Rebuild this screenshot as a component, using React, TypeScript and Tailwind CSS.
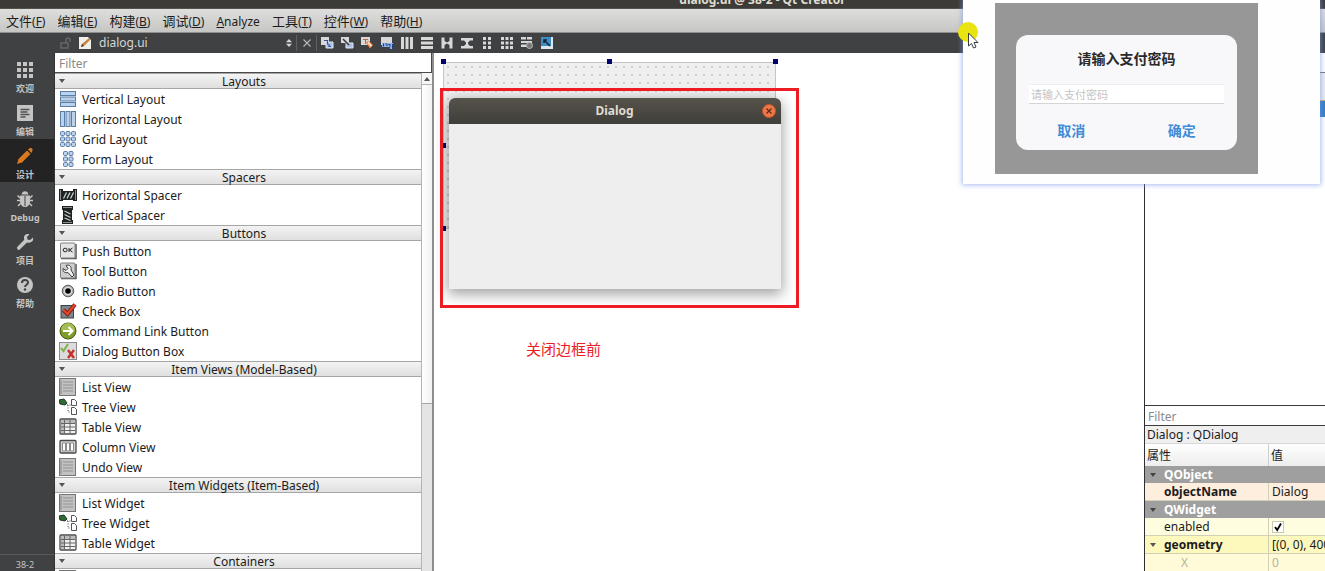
import type { ReactNode } from 'react';

/* ---------- data ---------- */

const menus: { text: string; key: string; latin?: boolean }[] = [
  { text: '文件', key: 'F' },
  { text: '编辑', key: 'E' },
  { text: '构建', key: 'B' },
  { text: '调试', key: 'D' },
  { text: 'nalyze', key: 'A', latin: true },
  { text: '工具', key: 'T' },
  { text: '控件', key: 'W' },
  { text: '帮助', key: 'H' },
];

const groups: { title: string; items: [string, string][] }[] = [
  {
    title: 'Layouts',
    items: [
      ['vlayout', 'Vertical Layout'],
      ['hlayout', 'Horizontal Layout'],
      ['grid', 'Grid Layout'],
      ['form', 'Form Layout'],
    ],
  },
  {
    title: 'Spacers',
    items: [
      ['hspacer', 'Horizontal Spacer'],
      ['vspacer', 'Vertical Spacer'],
    ],
  },
  {
    title: 'Buttons',
    items: [
      ['push', 'Push Button'],
      ['tool', 'Tool Button'],
      ['radio', 'Radio Button'],
      ['check', 'Check Box'],
      ['command', 'Command Link Button'],
      ['buttonbox', 'Dialog Button Box'],
    ],
  },
  {
    title: 'Item Views (Model-Based)',
    items: [
      ['list', 'List View'],
      ['tree', 'Tree View'],
      ['table', 'Table View'],
      ['column', 'Column View'],
      ['list', 'Undo View'],
    ],
  },
  {
    title: 'Item Widgets (Item-Based)',
    items: [
      ['list', 'List Widget'],
      ['tree', 'Tree Widget'],
      ['table', 'Table Widget'],
    ],
  },
  { title: 'Containers', items: [['list', '']] },
];

/* ---------- widget box icons (18x18) ---------- */

const blueBar = { fill: '#b9d3ee', stroke: '#5c7da3', strokeWidth: 1 };

const widgetIcons: Record<string, ReactNode> = {
  vlayout: [1.5, 7, 12.5].map((y) => <rect key={y} x="1.5" y={y} width="15" height="4" {...blueBar} />),
  hlayout: [1.5, 7, 12.5].map((x) => <rect key={x} x={x} y="1.5" width="4" height="15" {...blueBar} />),
  grid: [1.5, 7, 12.5].map((x) =>
    [1.5, 7, 12.5].map((y) => <rect key={`${x}-${y}`} x={x} y={y} width="4" height="4" rx="1" {...blueBar} />),
  ),
  form: [4.5, 10].map((x) =>
    [1.5, 7, 12.5].map((y) => <rect key={`${x}-${y}`} x={x} y={y} width="4" height="4" rx="1" {...blueBar} />),
  ),
  hspacer: (
    <>
      <path d="M0 3h4v2h10V3h4v12h-4v-1H4v1H0z" fill="#1e2222" />
      <path d="M1.500 4v10M16.500 4v10" stroke="#8a9090" />
      <path d="M4.500 12.500l3-6M8 12.500l3-6M11.500 12.500l3-6" stroke="#c9d2d0" strokeWidth="1.300" />
    </>
  ),
  vspacer: (
    <>
      <path d="M3 0h11v4h-1v10h1v4H3v-4h1V4H3z" fill="#1e2222" />
      <path d="M4 1.500h9M4 16.500h9" stroke="#8a9090" />
      <path d="M5.500 5l6 3M5.500 8.500l6 3M5.500 12l6 2.500" stroke="#c9d2d0" strokeWidth="1.300" />
    </>
  ),
  push: (
    <>
      <path d="M2 16.500h15V2" stroke="#555" strokeWidth="1.500" fill="none" />
      <rect x="1.500" y="1" width="14.500" height="15" rx="1" fill="#e4e4e4" stroke="#808080" />
      <ellipse cx="6.200" cy="8" rx="2" ry="1.800" fill="none" stroke="#222" />
      <path d="M10 6v4M13.500 6L10.500 8l3 2" stroke="#222" fill="none" />
    </>
  ),
  tool: (
    <>
      <path d="M2 16.500h15V2" stroke="#555" strokeWidth="1.500" fill="none" />
      <rect x="1.500" y="1" width="14.500" height="15" rx="1" fill="#cfcfcf" stroke="#808080" />
      <path d="M7 3.500c3-1.500 6 1 5 4.500l3 5-2 2-4-4.500c-3 1-5.500-1-5-4l3 2 2-2z" fill="#f2f2f2" stroke="#3c3c3c" />
    </>
  ),
  radio: (
    <>
      <circle cx="9" cy="9" r="5.800" fill="#a8a8a8" stroke="#606060" />
      <circle cx="9" cy="9" r="4.200" fill="#dedede" />
      <circle cx="9" cy="9" r="2.800" fill="#000" />
    </>
  ),
  check: (
    <>
      <rect x="2" y="3.500" width="12.500" height="12.500" fill="#7d8588" stroke="#3d4346" />
      <path d="M4.500 8l4 4L16 2.500" fill="none" stroke="#7d1c0c" strokeWidth="4" />
      <path d="M4.500 8l4 4L16 2.500" fill="none" stroke="#e2452c" strokeWidth="2.400" />
    </>
  ),
  command: (
    <>
      <circle cx="9" cy="9" r="8" fill="#7f9c2a" stroke="#47590f" />
      <path d="M2 8a7 7 0 0 1 14 0c-4 2-10 2-14 0z" fill="#a5bd55" />
      <path d="M4 9h9M9.500 5l4 4-4 4" fill="none" stroke="#fff" strokeWidth="2" />
    </>
  ),
  buttonbox: (
    <>
      <rect x="0.500" y="0.500" width="17" height="17" fill="#dcdcdc" stroke="#8c8c8c" />
      <path d="M2 6l2.500 3L9 2" fill="none" stroke="#7eb24a" strokeWidth="2" />
      <path d="M9 8l6 8M15 8l-6 8" stroke="#c9302c" strokeWidth="2.400" />
    </>
  ),
  list: (
    <>
      <rect x="0.500" y="0.500" width="16" height="17" fill="#c2c2c2" stroke="#757575" />
      <path d="M4 4h10M4 7h10M4 10h10M4 13h10" stroke="#929292" />
      <path d="M2 2v14" stroke="#a2a2a2" strokeWidth="2" />
    </>
  ),
  tree: (
    <>
      <path d="M0 2l5-1 3 4-2 2-5-1z" fill="#2f6b34" stroke="#1d3a1e" />
      <path d="M8 7h4M9 7v7h3" stroke="#444" strokeDasharray="1 1.500" fill="none" />
      <path d="M12.500 1.500h3l2 2v4h-5zM12.500 9.500h3l2 2v5h-5z" fill="#fff" stroke="#555" />
    </>
  ),
  table: (
    <>
      <rect x="1" y="1" width="16" height="15" rx="1" fill="#f2f2f2" stroke="#4a4a4a" strokeWidth="1.300" />
      <path d="M2 2h14v3H2zM2 5h3v10H2z" fill="#bcbcbc" />
      <path d="M2 5.500h14M2 9h14M2 12.500h14M5.500 2v13M11 2v13" stroke="#666" />
    </>
  ),
  column: (
    <>
      <rect x="1" y="2.500" width="16" height="12.500" rx="1" fill="#d4d4d4" stroke="#4a4a4a" strokeWidth="1.300" />
      <path d="M3.500 5h3v8h-3zM7.500 5h3v8h-3zM11.500 5h3v8h-3z" fill="#fff" stroke="#8a8a8a" />
    </>
  ),
};

/* ---------- tool bar icons (14x14) ---------- */

const light = '#d8d8d8';
const toolIcons: { name: string; art: ReactNode }[] = [
  {
    name: 'Edit Widgets',
    art: (
      <>
        <path d="M1 1h8v8H1z" fill={light} />
        <path d="M6 6h7v6H6z" fill="#a9bfe6" stroke="#e2e8f5" />
        <path d="M4 4.500h3.500v4M9 8v2.500h2" stroke="#35549a" strokeWidth="1.200" fill="none" />
      </>
    ),
  },
  {
    name: 'Edit Signals/Slots',
    art: (
      <>
        <path d="M1 1h8v6H1z" fill={light} />
        <path d="M6 7h7v5H6z" fill="#a9bfe6" stroke="#e2e8f5" />
        <path d="M3 3l6 6" stroke="#333" strokeWidth="1.500" />
      </>
    ),
  },
  {
    name: 'Edit Buddies',
    art: (
      <>
        <path d="M1 1h9v8H1z" fill={light} />
        <path d="M3 3.500h5M5.500 4v4" stroke="#b56a4a" />
        <path d="M5.500 6l3.500-1 4 4-3 3.500z" fill="#f08a4a" />
        <path d="M8 6.500l3.500 3.500" stroke="#fff1e4" strokeWidth="1.500" />
      </>
    ),
  },
  {
    name: 'Edit Tab Order',
    art: (
      <>
        <path d="M1 1h11v8H1z" fill={light} />
        <path d="M2 7h8v4H2zM10 7h3v6h-3" fill="#8db1ea" />
        <path d="M3.500 7.500v3M5.500 8h1.500v2M8.500 8.500h1.500v2M12.500 8v5" stroke="#1d3f80" fill="none" />
      </>
    ),
  },
  { name: 'Lay Out Horizontally', art: <path d="M1 1h3v12H1zM5.500 1h3v12h-3zM10 1h3v12h-3z" fill={light} /> },
  { name: 'Lay Out Vertically', art: <path d="M1 1h12v3H1zM1 5.500h12v3H1zM1 10h12v3H1z" fill={light} /> },
  { name: 'Horizontal Splitter', art: <path d="M1.500 1.500h3V5L7 6.500 9.500 5V1.500h3v11h-3V9L7 7.500 4.500 9v3.500h-3z" fill={light} /> },
  { name: 'Vertical Splitter', art: <path d="M1 2h12v2.500H10L8 6.500v1.500l2 2h3v2.500H1V10h3l2-2V6.500l-2-2H1z" fill={light} /> },
  { name: 'Form Layout', art: <path d="M3 1h3v3H3zM8 1h3v3H8zM3 5.500h3v3H3zM8 5.500h3v3H8zM3 10h3v3H3zM8 10h3v3H8z" fill={light} /> },
  {
    name: 'Grid Layout',
    art: (
      <path
        d="M1 1h3v3H1zM5.500 1h3v3h-3zM10 1h3v3h-3zM1 5.500h3v3H1zM5.500 5.500h3v3h-3zM10 5.500h3v3h-3zM1 10h3v3H1zM5.500 10h3v3h-3zM10 10h3v3h-3z"
        fill={light}
      />
    ),
  },
  {
    name: 'Break Layout',
    art: (
      <>
        <path d="M1 1h5v2.500H1zM7 1h5v2.500H7zM1 5h11v2H1zM1 8.500h6v2.500H1z" fill={light} />
        <circle cx="9.500" cy="9.500" r="3" fill="#777" stroke="#bbb" />
      </>
    ),
  },
  {
    name: 'Adjust Size',
    art: (
      <>
        <path d="M1 1h12v12H1z" fill="#dce6ee" />
        <path d="M1 1h10v9H1z" fill="#3f8cc2" />
        <path d="M4 4l6 6M4 7V4h3" stroke="#10283c" strokeWidth="1.500" fill="none" />
      </>
    ),
  },
];

/* ---------- mode selector ---------- */

const modes: { label: string; art: ReactNode; active?: boolean }[] = [
  {
    label: '欢迎',
    art: <path d="M1 1h4v4H1zM7 1h4v4H7zM13 1h4v4h-4zM1 7h4v4H1zM7 7h4v4H7zM13 7h4v4h-4zM1 13h4v4H1zM7 13h4v4H7zM13 13h4v4h-4z" fill="#c4c4c4" />,
  },
  {
    label: '编辑',
    art: (
      <>
        <path d="M1 1h16v16H1z" fill="#c4c4c4" />
        <path d="M4.500 5.500h9M4.500 8h7M4.500 10.500h9M4.500 13h5" stroke="#505152" strokeWidth="1.400" />
      </>
    ),
  },
  {
    label: '设计',
    active: true,
    art: <path d="M1 17l1.500-5L11 3.500 14.500 7 6 15.500zM12 2.500L14 1q1-.5 2 .5t.5 2L15.500 6z" fill="#d9791e" />,
  },
  {
    label: 'Debug',
    art: (
      <>
        <path d="M5.500 4.500C6 0 12 0 12.500 4.500z" fill="#c4c4c4" />
        <path d="M4 5.500h10v6q-1 5.500-5 5.500t-5-5.500z" fill="#c4c4c4" />
        <path d="M4 8L1.500 5.500M14 8l2.500-2.500M4 10.500H1M14 10.500h3M5 13l-3 3M13 13l3 3" stroke="#c4c4c4" strokeWidth="1.500" />
        <path d="M9 6v10" stroke="#404142" />
      </>
    ),
  },
  {
    label: '项目',
    art: (
      <path
        d="M17 4.500l-3 2.500-2.500-.5L11 4l2.500-2.800C9.500 0 7 3 8.300 6.800L1.200 14q-.8 1 .3 2.300t2.300.2l7.200-7c4 1 7-1.500 6-5z"
        fill="#c4c4c4"
      />
    ),
  },
  {
    label: '帮助',
    art: (
      <>
        <circle cx="9" cy="9" r="8" fill="#c4c4c4" />
        <path d="M6 7c0-4 6-4 6-.5C12 9 9 8.500 9 11" fill="none" stroke="#404142" strokeWidth="2" />
        <circle cx="9" cy="13.500" r="1.200" fill="#404142" />
      </>
    ),
  },
];

function Chevron({ className }: { className: string }) {
  return (
    <svg viewBox="0 0 6 4" className={`h-1 w-1.5 shrink-0 ${className}`} aria-hidden="true">
      <path d="M0 0h6L3 4z" fill="currentColor" />
    </svg>
  );
}

function MenuBar() {
  return (
    <nav className="flex h-6 shrink-0 items-center gap-3 border-b border-[#8e8e8c] bg-linear-to-b from-[#dededc] to-[#c6c6c4] px-1.5 pt-0.5 text-xs text-[#1c1c1c]">
      {menus.map((m) => (
        <button key={m.key} type="button" className="leading-5 whitespace-nowrap">
          {m.latin ? (
            <>
              <span className="underline">{m.key}</span>
              {m.text}
            </>
          ) : (
            <>
              <span className="text-[13px]">{m.text}</span>(<span className="underline">{m.key}</span>)
            </>
          )}
        </button>
      ))}
    </nav>
  );
}

function ToolBar() {
  return (
    <div className="flex h-5 shrink-0 items-center bg-[#404142] pl-[60px] text-[#d6d6d6]">
      <svg viewBox="0 0 12 12" className="mr-1.5 size-3" aria-hidden="true">
        <path d="M1 6h7v5H1zM6 6V3q0-2 2-2t2 2v2" fill="none" stroke="#666" strokeWidth="1.500" />
      </svg>
      <svg viewBox="0 0 14 14" className="size-3.5" aria-hidden="true">
        <path d="M1 1h9l3 3v9H1z" fill="#f1efea" />
        <path d="M3 11l1-3 7-6 1.500 1.500L6 10z" fill="#c98239" />
        <path d="M3 11l1-3 2 2z" fill="#4b3a2a" />
      </svg>
      <button type="button" className="flex w-[204px] items-center justify-between pr-1 pl-[7px] text-xs leading-5">
        dialog.ui
        <svg viewBox="0 0 6 8" className="h-2 w-1.5" aria-hidden="true">
          <path d="M0 3.200L3 0l3 3.200zM0 4.800h6L3 8z" fill="#d6d6d6" />
        </svg>
      </button>
      <button type="button" aria-label="Close document" className="flex h-4 w-[21px] items-center justify-center border-x border-[#5f5f5f]">
        <svg viewBox="0 0 8 8" className="size-2" aria-hidden="true">
          <path d="M0.500 0.500l7 7M7.500 0.500l-7 7" stroke="#b5b5b5" strokeWidth="1.200" />
        </svg>
      </button>
      {toolIcons.map((t) => (
        <button key={t.name} type="button" aria-label={t.name} className="flex w-5 items-center justify-center">
          <svg viewBox="0 0 14 14" className="size-3.5" aria-hidden="true">
            {t.art}
          </svg>
        </button>
      ))}
    </div>
  );
}

function ModeBar() {
  return (
    <aside className="flex w-[55px] shrink-0 flex-col border-r border-[#333] bg-[#404142]">
      {modes.map((m) => (
        <button
          key={m.label}
          type="button"
          className={`flex h-[43px] shrink-0 flex-col items-center justify-end gap-1 pr-1 pb-px text-[9px] leading-3 font-bold text-[#c4c4c4] ${
            m.active ? 'bg-[#232323]' : ''
          }`}
        >
          <svg viewBox="0 0 18 18" className="size-[18px]" aria-hidden="true">
            {m.art}
          </svg>
          {m.label}
        </button>
      ))}
      <div className="mt-auto h-[17px] border-t border-[#585858] pr-1 text-center text-[9px] leading-5 text-[#c4c4c4]">38-2</div>
    </aside>
  );
}

function WidgetBox() {
  return (
    <section className="flex w-[379px] shrink-0 flex-col border-r-2 border-[#8d8d8d] bg-white text-[#1b1b1b]">
      <input
        aria-label="Filter widgets"
        placeholder="Filter"
        className="h-5 w-full shrink-0 border-r border-b border-[#4a4a4a] px-1 pt-0.5 text-xs outline-none placeholder:text-[#8a8a8a]"
      />
      <div className="flex min-h-0 flex-1">
        <div className="min-w-0 flex-1 overflow-hidden">
          {groups.map((g) => (
            <div key={g.title}>
              <h2 className="flex h-4 items-center border-y border-[#a6a6a6] bg-linear-to-b from-[#f3f3f3] to-[#e0e0e0] pl-1 text-xs">
                <Chevron className="mr-0.5 text-[#555]" />
                <span className="flex-1 pt-px text-center leading-4">{g.title}</span>
              </h2>
              <ul>
                {g.items.map(([icon, label]) => (
                  <li key={label} className="flex h-5 items-center gap-[5px] pl-1 text-xs">
                    <svg viewBox="0 0 18 18" className="size-[18px]" aria-hidden="true">
                      {widgetIcons[icon]}
                    </svg>
                    <span className="pt-0.5 leading-4">{label}</span>
                  </li>
                ))}
              </ul>
            </div>
          ))}
        </div>
        <div className="flex w-[11px] shrink-0 flex-col border-l border-[#b4b4b4] bg-[#e4e4e4]">
          <button type="button" aria-label="Scroll up" className="flex h-3 items-center justify-center border-b border-[#b4b4b4] bg-[#f6f6f6]">
            <Chevron className="rotate-180 text-[#555]" />
          </button>
          <div className="h-[64%] border-b border-[#a6a6a6] bg-linear-to-r from-white to-[#f1f1f1]" />
        </div>
      </div>
    </section>
  );
}

function Canvas() {
  return (
    <main className="relative min-w-0 flex-1 overflow-hidden bg-white">
      <div className="absolute top-[9px] left-[9px] h-[167px] w-[333px] border border-[#c4c4c4] bg-[#efefef] bg-[radial-gradient(circle,#bdbdbd_0.6px,transparent_0.9px)] bg-[size:8px_8px]" />
      <i className="absolute top-1.5 left-[7px] size-[5px] bg-[#00006e]" />
      <i className="absolute top-1.5 left-[173px] size-[5px] bg-[#00006e]" />
      <i className="absolute top-1.5 left-[339px] size-[5px] bg-[#00006e]" />
      <i className="absolute top-[90px] left-[7px] size-[5px] bg-[#00006e]" />
      <i className="absolute top-[173px] left-[7px] size-[5px] bg-[#00006e]" />

      <section className="absolute top-[45px] left-[15px] flex h-[191px] w-[332px] flex-col rounded-t-md bg-[#eeeeee] shadow-[0_4px_14px_1px_rgba(0,0,0,0.38)]">
        <header className="flex h-[26px] items-center rounded-t-md bg-linear-to-b from-[#56534c] to-[#403e39] pr-[5px] pl-[18px]">
          <h1 className="flex-1 text-center text-xs font-bold text-[#dfdbd2]">Dialog</h1>
          <button type="button" aria-label="Close" className="flex size-[14px] items-center justify-center rounded-full border border-[#c0552a] bg-[#f07746]">
            <svg viewBox="0 0 6 6" className="size-1.5" aria-hidden="true">
              <path d="M0.500 0.500l5 5M5.500 0.500l-5 5" stroke="#5a2a16" strokeWidth="1.200" />
            </svg>
          </button>
        </header>
      </section>
      <div className="absolute top-[35px] left-1.5 h-[220px] w-[359px] border-3 border-[#ed1c24]" />
      <p className="absolute top-[285px] left-[92px] text-[15px] leading-[22px] text-[#ed1c24]">关闭边框前</p>
    </main>
  );
}

function GroupRow({ name }: { name: string }) {
  return (
    <tr className="h-[17px] bg-[#9f9fa0] font-bold text-white">
      <th colSpan={2} scope="colgroup" className="p-0 text-left">
        <span className="flex h-[17px] items-center pl-[5px] leading-4">
          <Chevron className="mr-2 text-[#444]" />
          {name}
        </span>
      </th>
    </tr>
  );
}

function PropertyRow({ name, color, children }: { name: ReactNode; color: string; children: ReactNode }) {
  return (
    <tr className={color}>
      <td className="border-r border-b border-[#d3d0b8] p-0">
        <span className="flex h-[17px] items-center pt-px leading-4">{name}</span>
      </td>
      <td className="border-b border-[#d3d0b8] p-0">
        <span className="flex h-[17px] items-center pt-px pl-[3px] leading-4 whitespace-nowrap">{children}</span>
      </td>
    </tr>
  );
}

function RightPanel() {
  return (
    <aside className="flex w-[181px] shrink-0 flex-col overflow-hidden border-l border-[#2f2f33] bg-white text-xs text-[#1b1b1b]">
      <div className="h-5 shrink-0 border-b border-[#777]" />
      <div className="h-7 shrink-0 border-b border-[#c9a878] bg-[#ececec]" />
      <div className="h-4 shrink-0 bg-[#2f7fc4]" />
      <div className="flex-1" />
      <input
        aria-label="Filter properties"
        placeholder="Filter"
        className="h-[21px] w-full shrink-0 border-y border-[#3c3c3c] px-[3px] pt-px text-xs outline-none placeholder:text-[#8a8a8a]"
      />
      <p className="h-[18px] shrink-0 border-b border-[#d8d8d8] bg-[#efefef] px-0.5 leading-[17px]">Dialog : QDialog</p>
      <table className="-mb-px w-full shrink-0 table-fixed border-separate border-spacing-0">
        <colgroup>
          <col className="w-[124px]" />
          <col />
        </colgroup>
        <thead>
          <tr className="h-[22px] bg-linear-to-b from-white to-[#ededed] text-left">
            <th scope="col" className="border-r border-[#cfcfcf] p-0 pt-0.5 pl-0.5 leading-4 font-normal">属性</th>
            <th scope="col" className="p-0 pt-0.5 pl-0.5 leading-4 font-normal">值</th>
          </tr>
        </thead>
        <tbody>
          <GroupRow name="QObject" />
          <PropertyRow color="bg-[#fdeedd]" name={<b className="pl-[19px]">objectName</b>}>
            Dialog
          </PropertyRow>
          <GroupRow name="QWidget" />
          <PropertyRow color="bg-[#fffde0]" name={<label htmlFor="enabled" className="pl-[19px]">enabled</label>}>
            <span className="grid size-3 place-items-center">
              <input
                id="enabled"
                type="checkbox"
                defaultChecked
                className="peer col-start-1 row-start-1 size-3 appearance-none border border-[#c9c9b8] bg-white"
              />
              <svg viewBox="0 0 10 10" className="pointer-events-none col-start-1 row-start-1 hidden size-2.5 peer-checked:block" aria-hidden="true">
                <path d="M2 5l2.200 3L8 1.500" fill="none" stroke="#000" strokeWidth="1.800" />
              </svg>
            </span>
          </PropertyRow>
          <PropertyRow
            color="bg-[#fdf8bb]"
            name={
              <>
                <Chevron className="mr-2 ml-[5px] text-[#555]" />
                <b>geometry</b>
              </>
            }
          >
            [(0, 0), 400 x 300]
          </PropertyRow>
          <PropertyRow color="bg-[#fffbd8] text-[#b5b3a0]" name={<span className="pl-9">X</span>}>
            0
          </PropertyRow>
        </tbody>
      </table>
    </aside>
  );
}

function PasswordPreview() {
  return (
    <div className="absolute top-0 right-[5px] flex h-[184px] w-[357px] bg-[#fefeff] pt-[3px] pl-8 shadow-[0_0_5px_1px_rgba(120,150,235,0.65)]">
      <div className="flex h-[171px] w-[263px] items-center justify-center bg-[#979797] pb-[22px] pt-[30px]">
        <form className="flex h-[115px] w-[221px] flex-col rounded-xl bg-[#f8f8fa] pt-3.5" onSubmit={(e) => e.preventDefault()}>
          <label htmlFor="pay" className="text-center text-sm leading-5 font-bold text-[#2a2a2a]">
            请输入支付密码
          </label>
          <input
            id="pay"
            type="password"
            placeholder="请输入支付密码"
            className="mx-[13px] mt-[15px] h-5 border-y border-t-[#eeeef0] border-b-[#d5d5d8] bg-white px-0.5 text-[11px] outline-none placeholder:text-[#c4c4c6]"
          />
          <div className="grid flex-1 grid-cols-2 pt-2 text-sm font-bold text-[#3f8cd8]">
            <button type="button">取消</button>
            <button type="submit">确定</button>
          </div>
        </form>
      </div>
      <svg viewBox="0 0 22 28" className="absolute top-[22px] -left-1.5 h-7 w-[22px]" aria-hidden="true">
        <circle cx="11" cy="10" r="10" fill="#e9e312" />
        <path d="M11.500 11v13l3-2.500 2 4.500 2.500-1-2-4.500h4z" fill="#fff" stroke="#3c3c3c" />
      </svg>
    </div>
  );
}

export default function App() {
  return (
    <div className="relative flex h-screen flex-col overflow-hidden bg-white font-['Noto_Sans','Noto_Sans_CJK_SC',sans-serif]">
      <header className="flex h-[9px] shrink-0 items-end justify-center overflow-hidden border-b border-[#55534d] bg-[#3c3b37] pl-[200px] text-xs leading-4 font-bold text-[#dfdbd2]">
        dialog.ui @ 38-2 - Qt Creator
      </header>
      <MenuBar />
      <ToolBar />
      <div className="flex min-h-0 flex-1">
        <ModeBar />
        <WidgetBox />
        <Canvas />
        <RightPanel />
      </div>
      <PasswordPreview />
    </div>
  );
}
